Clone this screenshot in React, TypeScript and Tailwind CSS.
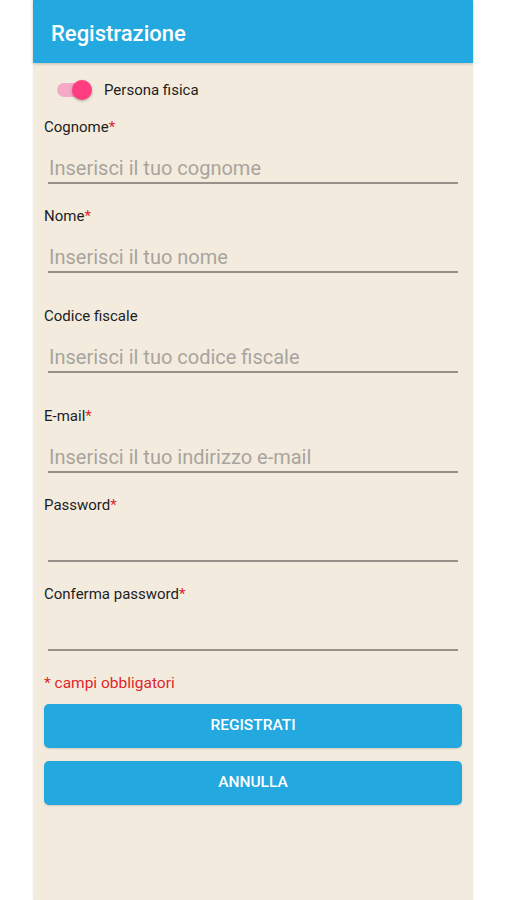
import { ReactNode } from "react";

const fields = [
  { label: "Cognome", required: true, placeholder: "Inserisci il tuo cognome", gap: "mt-[17px]" },
  { label: "Nome", required: true, placeholder: "Inserisci il tuo nome", gap: "mt-[22px]" },
  { label: "Codice fiscale", required: false, placeholder: "Inserisci il tuo codice fiscale", gap: "mt-[33px]" },
  { label: "E-mail", required: true, placeholder: "Inserisci il tuo indirizzo e-mail", gap: "mt-[33px]" },
  { label: "Password", required: true, placeholder: "", gap: "mt-[22px]" },
  { label: "Conferma password", required: true, placeholder: "", gap: "mt-[22px]" },
];

const Field = ({ label, required, placeholder, gap }: { label: string; required: boolean; placeholder: string; gap: string }) => (
  <div className={gap}>
    <div className="h-5 text-[15px] leading-5 text-[#1d1d1d]">
      {label}
      {required && <span className="text-[#e0262a]">*</span>}
    </div>
    <div className="mx-1 h-[47px] flex items-end border-b-2 border-[#96928a] pb-[2px]">
      <span className="pl-[1px] text-[20px] leading-6 text-[#a8a49d]">{placeholder}</span>
    </div>
  </div>
);

const Button = ({ children, className = "" }: { children: ReactNode; className?: string }) => (
  <button className={`h-11 w-full rounded-[5px] bg-[#23a8e0] text-white text-[15.5px] font-medium shadow-[0_1px_2px_rgba(0,0,0,0.15)] ${className}`}>
    {children}
  </button>
);

export default function App() {
  return (
    <div className="min-h-[900px] bg-white" style={{ fontFamily: "Roboto, 'Liberation Sans', sans-serif" }}>
      <div className="mx-auto w-[440px] min-h-[900px] bg-[#f3ecde] shadow-[0_0_2px_rgba(0,0,0,0.08)]">
        <header className="h-[63px] bg-[#23a8e0] flex items-center pt-[4px] px-[18px] shadow-[0_1px_3px_rgba(0,0,0,0.2)]">
          <h1 className="text-white text-[22px] font-medium">Registrazione</h1>
        </header>

        <div className="px-[11px]">
          {/* switch */}
          <div className="mt-[17px] h-5 flex items-center">
            <div className="relative ml-[13px] w-[34px] h-[14px] rounded-full bg-[#f6a9c4]">
              <div className="absolute right-[-1px] top-1/2 -translate-y-1/2 w-5 h-5 rounded-full bg-[#ff3d80] shadow-[0_1px_3px_rgba(0,0,0,0.3)]" />
            </div>
            <span className="ml-[13px] text-[15px] text-[#1d1d1d]">Persona fisica</span>
          </div>

          {fields.map((f) => (
            <Field key={f.label} {...f} />
          ))}

          <p className="mt-[22px] h-5 text-[15.5px] leading-5 text-[#e0262a]">* campi obbligatori</p>

          <div className="mt-[11px] flex flex-col gap-[13px]">
            <Button>REGISTRATI</Button>
            <Button>ANNULLA</Button>
          </div>
        </div>
      </div>
    </div>
  );
}
